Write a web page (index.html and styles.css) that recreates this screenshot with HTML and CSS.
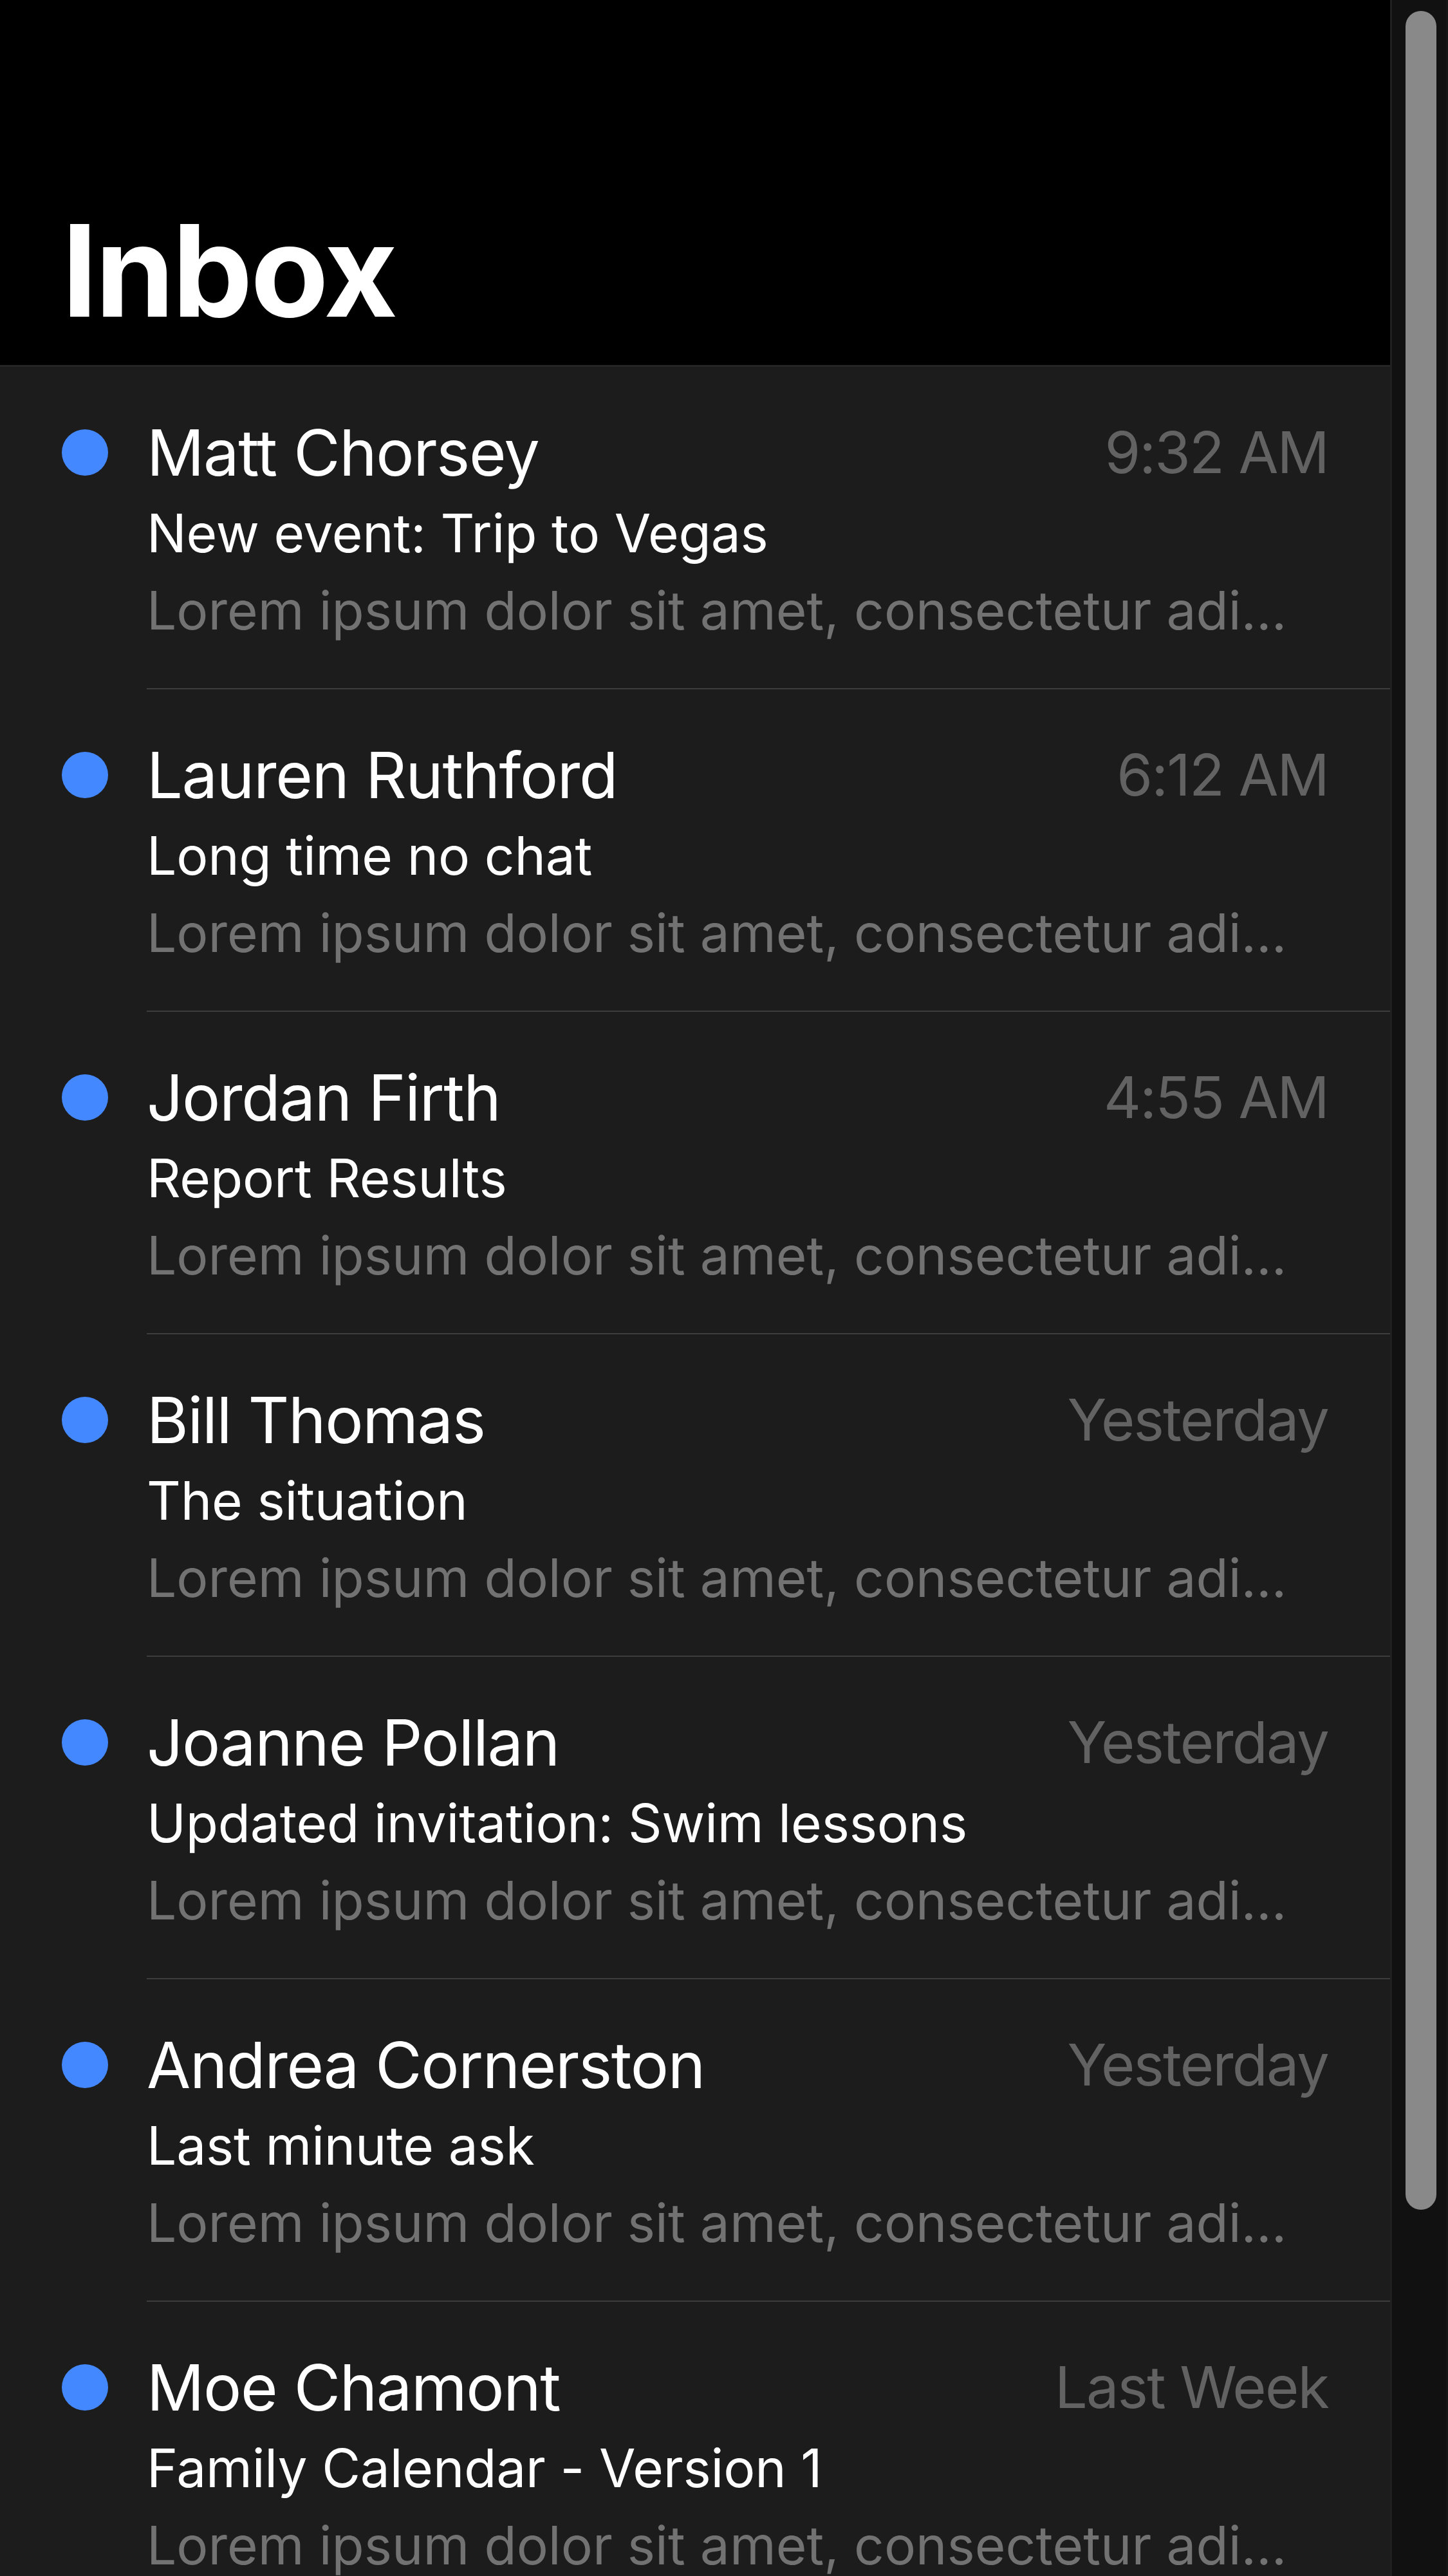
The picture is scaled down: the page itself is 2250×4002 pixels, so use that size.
FILE: index.html
```html
<!DOCTYPE html>
<html lang="en">
<head>
<meta charset="utf-8">
<title>Inbox</title>
<link rel="stylesheet" href="styles.css">
</head>
<body>
<div class="app">
  <main class="main">
    <header class="header">
      <h1 class="title">Inbox</h1>
    </header>
    <ul class="list">
      <li class="row">
        <span class="dot"></span>
        <div class="body">
          <div class="top"><span class="name">Matt Chorsey</span><span class="time">9:32 AM</span></div>
          <div class="subject">New event: Trip to Vegas</div>
          <div class="preview">Lorem ipsum dolor sit amet, consectetur adi…</div>
        </div>
      </li>
      <li class="row">
        <span class="dot"></span>
        <div class="body">
          <div class="top"><span class="name">Lauren Ruthford</span><span class="time">6:12 AM</span></div>
          <div class="subject">Long time no chat</div>
          <div class="preview">Lorem ipsum dolor sit amet, consectetur adi…</div>
        </div>
      </li>
      <li class="row">
        <span class="dot"></span>
        <div class="body">
          <div class="top"><span class="name">Jordan Firth</span><span class="time">4:55 AM</span></div>
          <div class="subject">Report Results</div>
          <div class="preview">Lorem ipsum dolor sit amet, consectetur adi…</div>
        </div>
      </li>
      <li class="row">
        <span class="dot"></span>
        <div class="body">
          <div class="top"><span class="name">Bill Thomas</span><span class="time">Yesterday</span></div>
          <div class="subject">The situation</div>
          <div class="preview">Lorem ipsum dolor sit amet, consectetur adi…</div>
        </div>
      </li>
      <li class="row">
        <span class="dot"></span>
        <div class="body">
          <div class="top"><span class="name">Joanne Pollan</span><span class="time">Yesterday</span></div>
          <div class="subject">Updated invitation: Swim lessons</div>
          <div class="preview">Lorem ipsum dolor sit amet, consectetur adi…</div>
        </div>
      </li>
      <li class="row">
        <span class="dot"></span>
        <div class="body">
          <div class="top"><span class="name">Andrea Cornerston</span><span class="time">Yesterday</span></div>
          <div class="subject">Last minute ask</div>
          <div class="preview">Lorem ipsum dolor sit amet, consectetur adi…</div>
        </div>
      </li>
      <li class="row">
        <span class="dot"></span>
        <div class="body">
          <div class="top"><span class="name">Moe Chamont</span><span class="time">Last Week</span></div>
          <div class="subject">Family Calendar - Version 1</div>
          <div class="preview">Lorem ipsum dolor sit amet, consectetur adi…</div>
        </div>
      </li>
    </ul>
  </main>
  <div class="scrollbar"><div class="thumb"></div></div>
</div>
</body>
</html>
```
FILE: styles.css
```css
* { box-sizing: border-box; }
html, body {
  margin: 0;
  padding: 0;
  height: 100%;
  background: #1c1c1c;
  overflow: hidden;
}
body {
  font-family: Inter, "Noto Sans", sans-serif;
  color: #ffffff;
}
.app {
  display: flex;
  height: 100vh;
}
.main {
  flex: 1;
  min-width: 0;
  overflow: hidden;
  background: #1c1c1c;
}
.header {
  height: 570px;
  background: #000;
  border-bottom: 3px solid #262626;
  display: flex;
  align-items: flex-end;
  padding: 0 96px 27px 96px;
}
.title {
  margin: 0;
  font-size: 198px;
  line-height: 240px;
  font-weight: 700;
  letter-spacing: -3.5px;
}
.list {
  list-style: none;
  margin: 0;
  padding: 0;
}
.row {
  display: flex;
  align-items: flex-start;
  padding-left: 96px;
}
.dot {
  flex: none;
  width: 72px;
  height: 72px;
  border-radius: 50%;
  background: #4488ff;
  margin-top: 97px;
  margin-right: 60px;
}
.body {
  flex: 1;
  min-width: 0;
  padding: 73px 96px 60px 0;
  border-bottom: 2px solid #3d3d3d;
}
.top {
  display: flex;
  align-items: center;
  justify-content: space-between;
  height: 120px;
}
.name {
  font-size: 99px;
  line-height: 120px;
  letter-spacing: -1.4px;
  color: #ffffff;
  white-space: nowrap;
}
.time {
  font-size: 90px;
  line-height: 120px;
  letter-spacing: -1.9px;
  color: #626262;
  white-space: nowrap;
}
.subject {
  margin-top: 6px;
  font-size: 82px;
  line-height: 120px;
  letter-spacing: -0.2px;
  color: #ffffff;
  white-space: nowrap;
}
.preview {
  font-size: 82px;
  line-height: 120px;
  color: #727272;
  white-space: nowrap;
  overflow: hidden;
  text-overflow: ellipsis;
}
.scrollbar {
  flex: none;
  width: 90px;
  height: 100%;
  background: #111111;
  border-left: 3px solid #202020;
  border-right: 3px solid #161616;
  padding: 17px 15px 0 21px;
}
.thumb {
  width: 48px;
  height: 3416px;
  border-radius: 24px;
  background: #898989;
}
```
